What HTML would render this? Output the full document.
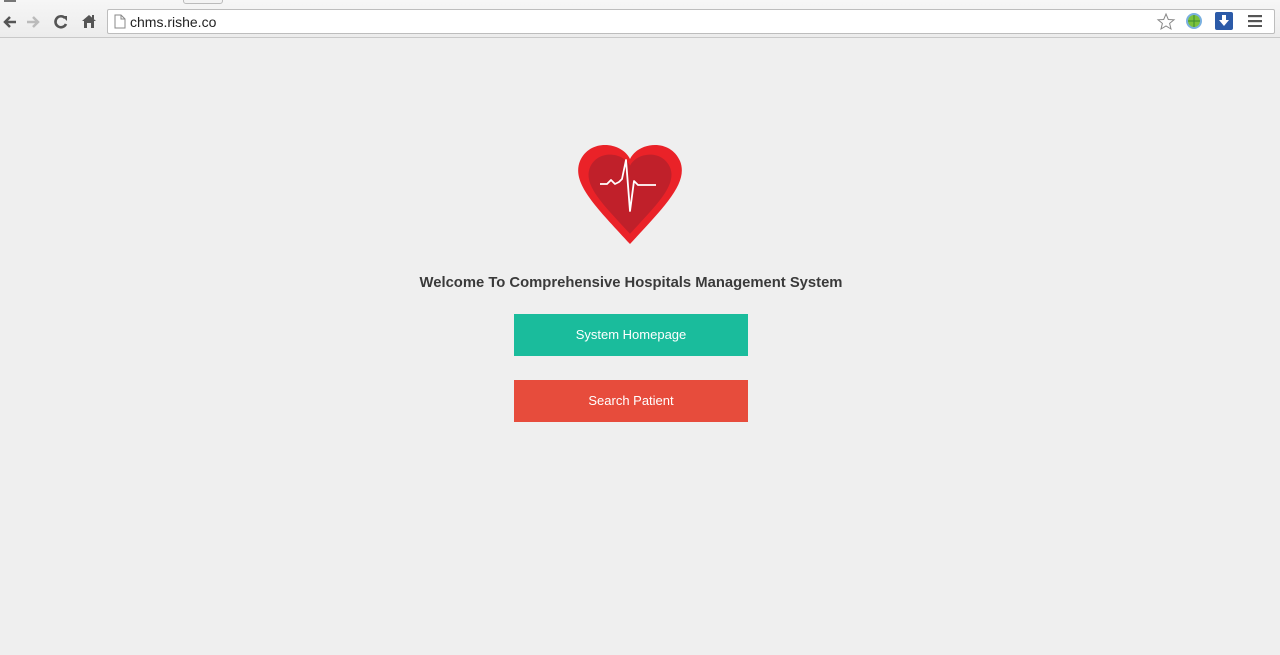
<!DOCTYPE html>
<html><head><meta charset="utf-8"><style>
*{margin:0;padding:0;box-sizing:border-box}
body{width:1280px;height:655px;overflow:hidden;background:#efefef;font-family:"Liberation Sans",sans-serif;position:relative}
.bar{position:absolute;left:0;top:0;width:1280px;height:38px;background:linear-gradient(#f6f6f6,#ececec);border-bottom:1px solid #c8c8c8}
.tab{position:absolute;left:183px;top:-6px;width:40px;height:10px;border:1px solid #bbb;border-radius:3px;background:#f3f3f3}
.addr{position:absolute;left:107px;top:9px;width:1168px;height:25px;background:#fff;border:1px solid #bdbdbd;border-radius:2px}
.url{position:absolute;left:130px;top:14px;font-size:14px;color:#222}
.ic{position:absolute}
h1{position:absolute;top:275px;left:0;width:1262px;text-align:center;font-size:14.8px;font-weight:bold;color:#3a3a3a}
.btn{position:absolute;left:514px;width:234px;height:42px;color:#fff;font-size:13px;text-align:center;line-height:42px}
</style></head><body>
<div class="bar">
<div class="tab"></div>
<svg class="ic" style="left:0;top:0" width="22" height="4"><rect x="4" y="0" width="12" height="2" fill="#777"/></svg>
<svg class="ic" style="left:2px;top:15px" width="16" height="14"><path d="M14 7H3M8 2L3 7L8 12" stroke="#555" stroke-width="2.5" fill="none"/></svg>
<svg class="ic" style="left:25px;top:15px" width="16" height="14"><path d="M2 7H13M8 2L13 7L8 12" stroke="#bbb" stroke-width="2.5" fill="none"/></svg>
<svg class="ic" style="left:53px;top:14px" width="16" height="16"><path d="M12 4A5.5 5.5 0 1 0 13 10" stroke="#555" stroke-width="2.6" fill="none"/><path d="M9 2H14V7Z" fill="#555"/></svg>
<svg class="ic" style="left:81px;top:13px" width="16" height="16"><path d="M1 8L8 2L15 8H13V15H10V10H6V15H3V8Z" fill="#555"/><rect x="11" y="2" width="2" height="4" fill="#555"/></svg>
<div class="addr"></div>
<svg class="ic" style="left:114px;top:14px" width="12" height="15"><path d="M1 1H7L11 5V14H1Z M7 1V5H11" stroke="#888" fill="#fff"/></svg>
<div class="url">chms.rishe.co</div>
<svg class="ic" style="left:1156px;top:12px" width="20" height="20"><path d="M10 2L12.3 7.5L18 7.8L13.6 11.4L15 17L10 14L5 17L6.4 11.4L2 7.8L7.7 7.5Z" stroke="#888" fill="#fff" stroke-width="1"/></svg>
<svg class="ic" style="left:1185px;top:12px" width="18" height="18"><circle cx="9" cy="9" r="8" fill="#7ab0e0"/><circle cx="9" cy="9" r="6" fill="#7cc23c"/><path d="M3 9H15M9 3V15" stroke="#3a8a30" stroke-width="1"/></svg>
<svg class="ic" style="left:1215px;top:12px" width="18" height="18"><rect x="0" y="0" width="18" height="18" rx="2" fill="#2b5aa8"/><path d="M7 3H11V8H14L9 14L4 8H7Z" fill="#fff"/></svg>
<svg class="ic" style="left:1248px;top:15px" width="14" height="12"><rect y="0" width="14" height="2.2" fill="#555"/><rect y="5" width="14" height="2.2" fill="#555"/><rect y="10" width="14" height="2.2" fill="#555"/></svg>
</div>
<svg class="ic" style="left:576px;top:141px" width="108" height="104" viewBox="0 0 108 104">
<path d="M54 18C46 1 14 -3 4 20C-5 42 20 66 54 103C88 66 113 42 104 20C94 -3 62 1 54 18Z" fill="#ea2228"/>
<g transform="translate(54 52) scale(0.8) translate(-54 -52)">
<path d="M54 18C46 1 14 -3 4 20C-5 42 20 66 54 103C88 66 113 42 104 20C94 -3 62 1 54 18Z" fill="#c0202a"/>
</g>
<path d="M24 43H31L35 39L39 43L43 41L46 38L50 19L54 70L58 40L62 44H80" stroke="#fff" stroke-width="1.8" fill="none" stroke-linejoin="round"/>
</svg>
<h1>Welcome To Comprehensive Hospitals Management System</h1>
<div class="btn" style="top:314px;background:#1abc9c">System Homepage</div>
<div class="btn" style="top:380px;background:#e74c3c">Search Patient</div>
</body></html>
